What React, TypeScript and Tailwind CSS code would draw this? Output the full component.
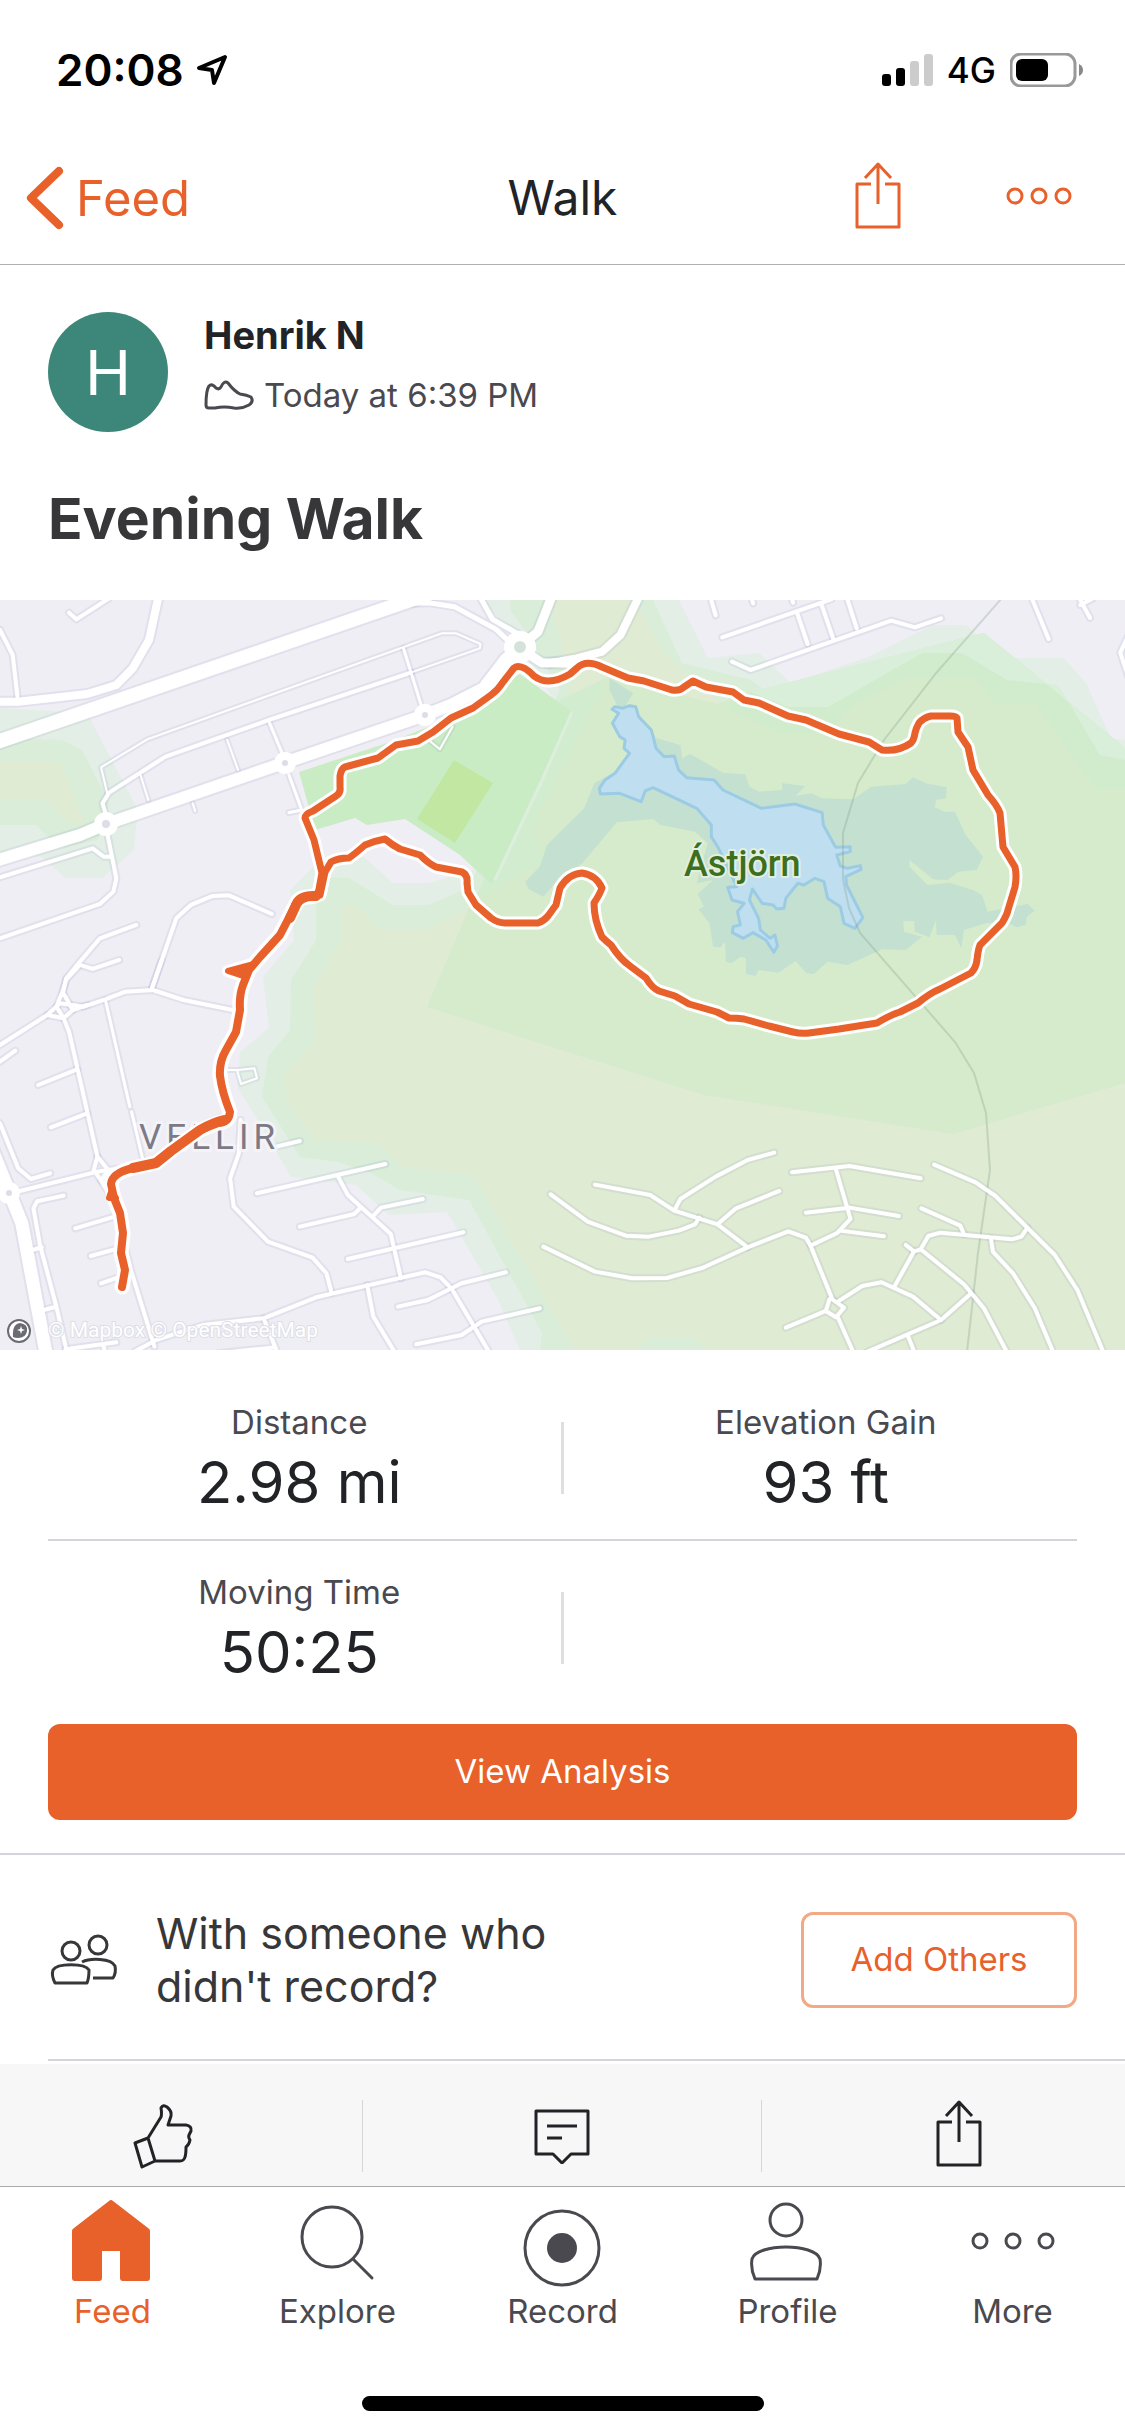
import React from "react";

/* ---------- Map ---------- */

type Road = { w: number; d: string };
type Tile = { transform: string; roads: Road[] };

const tiles: Tile[] = [
  {
    transform: "matrix(.3635 0 0 .3333 0 -10)",
    roads: [
      { w: 4, d: "M0 120L35 195L48 320M190 68L210 88L300 25" },
      { w: 5, d: "M1130 40L1180 38L1250 50L1365 118L1410 165M1320 20L1355 88L1430 135" },
      { w: 2, d: "M295 610L278 532L405 448L1215 130L1255 130L1322 162L1320 175L1130 248" },
      { w: 4, d: "M290 670L282 640L300 608L455 500L740 390L1130 248" },
      { w: 3, d: "M1110 175L1160 350M740 395L780 500" },
      { w: 2, d: "M625 450L655 540M385 550L408 630M530 640L537 663M1185 455L1210 478L1245 410" },
      { w: 3, d: "M795 555L830 660L795 668M845 690L892 850" },
      { w: 4, d: "M0 862L255 775L285 800L308 800M295 730L308 800L320 865L312 905L275 942L0 1045" },
      { w: 4, d: "M418 1195L485 985L525 945L585 918L630 916L748 972" },
      { w: 4, d: "M375 1005L275 1045L220 1115L182 1165L172 1215M220 1125L255 1137L328 1110" },
      { w: 8, d: "M0 335L50 335L240 312L320 285L365 235L410 150L440 0" },
      { w: 9, d: "M1430 170L1480 125L1525 0" },
      { w: 9, d: "M1450 190L1490 218L1600 220" },
      { w: 12, d: "M-20 815L220 735L290 703L783 518L1170 375L1240 345L1330 295L1390 210L1430 170" },
      { w: 14, d: "M-40 468L1130 30L1250 -15" },
    ],
  },
  {
    transform: "matrix(.3635 0 0 .3333 555 -10)",
    roads: [
      { w: 4, d: "M427 20L442 76M540 20L545 40M650 20L655 38M460 142L760 28M665 65L695 162M732 40L765 145M802 20L830 115" },
      { w: 4, d: "M487 215L538 240L925 92L990 112L1062 85M1310 20L1358 147M1440 20L1472 84M1445 45L1480 25M1580 130L1555 188L1580 270" },
      { w: 8, d: "M-20 220L60 205L130 185L180 135L240 0" },
    ],
  },
  {
    transform: "matrix(.3635 0 0 .3333 0 360)",
    roads: [
      { w: 4, d: "M0 255L130 165L165 130L230 140L290 118L345 95L420 90L505 120L640 150" },
      { w: 4, d: "M220 15L182 60L172 95L155 140L175 175L200 150L172 95M175 175L190 215L268 590" },
      { w: 4, d: "M130 165L175 175M200 150L240 135M418 85L445 0M0 305L42 272M105 375L212 328M140 502L240 460" },
      { w: 3, d: "M290 120L357 440M362 455L392 595" },
      { w: 4, d: "M0 490L50 625L85 657L138 640M30 700L268 635L330 625M268 590L258 630L278 662L298 630L268 590" },
      { w: 4, d: "M175 707L102 724L92 745L110 855L155 1040L185 1180M88 870L115 862M120 1050L155 1040" },
      { w: 4, d: "M278 662L310 720L360 930L425 1160M207 805L315 770M250 888L325 865M278 970L345 945" },
      { w: 2, d: "M625 330L655 330L700 325L707 355L663 372L652 330" },
      { w: 4, d: "M662 480L657 580L633 655L643 740L737 845L860 893L898 940L912 998M760 560L825 543" },
      { w: 4, d: "M707 700L1060 612M930 650L957 705L1075 822L1103 955M825 800L975 762L990 745M1025 770L1048 743L1163 717" },
      { w: 4, d: "M957 897L1275 817M180 1168L320 1147M285 1160L290 1180M370 1175L430 1140L560 1095L725 1075L870 1012L1105 953L1170 937L1212 952L1243 987L1345 1175" },
      { w: 4, d: "M1010 975L1027 1070L1085 1175M1095 1040L1177 1020L1270 970L1392 937M1145 1153L1270 1125L1325 1085L1485 1045" },
      { w: 4, d: "M725 1075L762 1175M600 1180L750 1163" },
      { w: 13, d: "M-40 520L25 695L60 790L130 1200" },
    ],
  },
  {
    transform: "matrix(.3635 0 0 .3333 555 360)",
    roads: [
      { w: 4, d: "M110 674L262 705L328 752L447 793L530 862M328 752L345 717L442 650L530 600L603 578M447 793L498 745L617 693" },
      { w: 4, d: "M-12 703L90 785L195 827L258 830L340 812L385 793L397 773M-32 860L110 935L212 955L308 954L405 924L530 862L642 814L690 833L703 857L763 1018" },
      { w: 4, d: "M652 637L810 618L1006 655M772 625L813 777L775 820L703 857M690 758L810 743L946 768M785 812L905 829" },
      { w: 4, d: "M1043 614L1157 667L1212 708L1375 885L1437 990L1510 1180M1008 745L1115 797L1125 822" },
      { w: 4, d: "M1300 803L1283 830L1257 838L1060 818L1027 828L1006 868L988 874L965 855M1006 868L1125 973L1180 1045L1245 1180" },
      { w: 4, d: "M1199 835L1205 876L1260 940L1320 1045L1372 1180M988 874L932 983M778 1025L845 978L898 967L985 1010L1062 1080L1145 1000" },
      { w: 4, d: "M763 1018L795 1043L773 1072L745 1053L755 1018ZM745 1053L635 1103M778 1072L820 1175M1062 1080L860 1175M970 1125L990 1180" },
    ],
  },
];

const route =
  "M320 295L325 272L331 262Q338 258 349 258Q356 253 365 245Q374 241 385 239Q392 245 400 249L420 255Q429 264 436 267L462 272Q468 275 467 283L468 292L476 305L491 318Q498 323 505 323L538 323Q544 321 548 316L556 305L560 288Q568 274 582 273Q596 275 602 288Q600 294 594 303Q594 320 602 337Q606 341 611 345Q620 359 630 366L646 378Q652 388 659 391L675 396L689 404L717 412L729 418Q737 418 744 419L769 426L793 432Q801 434 809 433L839 429L877 423Q890 415 900 412L918 403Q930 393 940 389L971 373Q976 368 977 360Q978 350 980 345L1002 323Q1007 315 1008 310L1015 287Q1017 276 1015 267L1003 247L1000 213Q997 205 988 195L973 170L968 147L958 132L957 118Q956 116 950 116L931 116Q923 118 919 123Q916 128 915 133Q914 140 911 143Q898 152 882 150L869 142L839 134L806 120L788 116L759 103L744 100L733 92L706 87L693 81L684 87Q680 91 672 90L644 81L628 78L602 67Q586 59 577 68L570 74Q548 87 534 76Q521 63 514 68Q506 78 503 82Q498 90 491 95L473 108L451 118L433 132L418 141L396 145L378 158L345 167Q341 169 340 176L340 187Q341 193 336 196L313 211Q305 214 305 218L314 240L322 273L318 295";

const sharedLeg =
  "M323 274L320 290Q317 297 308 297Q299 297 296 304L280 335L260 357L249 370L243 385Q239 396 240 410L236 432L226 450Q219 462 220 476Q222 492 230 512Q229 523 218 523L200 530L171 551L156 563L133 568Q112 573 111 584L114 598L120 613L123 633L121 653L125 670L122 687";

function RouteMap() {
  return (
    <svg
      viewBox="0 0 1125 750"
      className="block h-auto w-full bg-[#efeef4]"
      role="img"
      aria-label="Map of the walk around Ástjörn"
    >
      {/* land cover */}
      <path fill="#e3efe6" d="M0 108L87 113L138 210L134 250L102 278L65 278L42 257L0 255Z" />
      <path fill="#d9edd9" d="M0 138L62 140L82 150L109 203L98 240L60 248L36 225L0 225Z" />
      <path fill="#dfebd3" d="M0 162L60 162L87 227L62 218L47 200L0 200Z" />
      <path
        fill="#e3efe6"
        d="M320 260L364 257L393 283L429 283L473 270L491 110L560 110L510 30L480 0L679 0L708 58L759 53L791 83L868 57L933 25L966 25L1004 58L1064 58L1086 83L1111 138L1125 140V750H520L498 700L447 612L389 615L356 585L291 577L262 527L238 488L240 452L269 428L263 377L294 340L290 290Z"
      />
      <path
        fill="#d9edd9"
        d="M316 277L349 278L393 305L429 305L469 287L560 90L525 30L510 10V0H653L682 63L751 80L788 107H828L922 53H962L1007 80L1058 85L1100 155L1125 160V750H551L520 693L469 600L400 590L371 573L338 562L300 557L262 497L268 457L290 430L291 380L316 340Z"
      />
      <path
        fill="#dfebd3"
        d="M340 305L360 308L378 330H425L469 308L560 140L570 80L550 0H635L665 55L720 102L1125 480V750H575L473 575L403 567L378 543L314 540L287 503L284 475L316 440L313 387L342 340Z"
      />
      <path fill="#d9edd9" d="M545 710L570 750H540ZM650 737H695L707 750H638Z" />
      <path
        fill="#d5ebcb"
        d="M469 308L606 78L718 104L751 92L984 33L1125 148V483L953 534L704 495L555 448L427 407Z"
      />
      <path
        fill="#d1eccd"
        d="M751 92L984 33L1125 148V187H1095L1035 103L995 103L973 77H908L853 105L828 133H780L725 108Z"
      />
      <path
        fill="#d9efda"
        d="M751 92L984 33L1125 148V160L1100 155L1058 85L1007 80L962 53H922L828 107H788Z"
      />
      <path fill="#d2ecd0" d="M606 78L530 230L545 260L475 300L505 230L560 100Z" />
      <path
        fill="#caecc5"
        d="M299 172L390 142L451 118L520 74L572 112L491 284L460 255L405 219L367 225L355 218L315 230Z"
      />
      <path fill="#c2e7a2" d="M454 160L493 183L455 243L417 219Z" />
      <path fill="none" stroke="#dcefdc" strokeWidth="3" d="M572 112L540 185L495 280" />

      {/* wetlands, lake and railway */}
      <g transform="matrix(.3635 0 0 .3333 555 -10)">
        <path
          fill="#c4e0d0"
          d="M150 265L215 310L195 345L280 445L345 465L350 505L372 492L462 548L523 553L535 590L562 605L625 600L625 580L688 588L662 618L705 610L735 625L820 628L870 590L965 582L985 562L1020 580L1078 592L1075 625L1048 630L1045 652L1072 665L1100 665L1130 735L1178 800L1160 840L1110 845L1080 870L1040 868L975 810L975 830L1025 885L1085 878L1150 900L1175 915L1190 965L1300 942L1320 962L1298 980L1295 1005L1270 1012L1240 995L1185 1000L1125 1020L1118 1075L1100 1035L1050 1035L1048 990L1030 1042L990 1025L988 993L958 993L960 1025L1010 1040L965 1080L900 1078L805 1125L750 1115L712 1152L692 1150L662 1113L615 1148L560 1140L552 1158L525 1152L525 1105L510 1100L485 1120L470 1115L468 1055L455 1072L435 1070L425 1000L395 958L410 950L392 912L435 870L390 880L420 760L385 725L290 705L270 687L170 697L75 820L0 880L-32 920L-72 898L-82 875L-42 830L-22 765L80 655L108 580L240 500L150 300Z"
        />
        <path
          fill="#bfdff0"
          stroke="#9ccbe4"
          strokeWidth="3"
          strokeLinejoin="round"
          vectorEffect="non-scaling-stroke"
          d="M157 358L165 350L185 355L205 347L222 350L230 380L265 420L278 475L300 500L328 498L340 540L362 563L438 570L462 600L568 655L660 642L735 668L738 705L772 772L812 770L812 785L775 795L785 828L805 835L840 827L842 838L800 860L802 885L847 983L825 1015L795 1000L785 950L750 925L740 875L715 865L685 885L668 880L635 925L630 955L610 957L600 945L570 940L543 897L535 930L560 985L565 1020L592 1045L605 1035L612 1068L602 1087L580 1050L545 1028L518 1045L488 1028L490 1010L510 1005L502 965L520 940L487 930L475 892L500 890L450 775L430 740L430 705L390 655L270 593L248 603L237 635L178 610L125 612L122 595L138 570L165 550L205 490L190 475L193 450L178 440L158 400L175 370Z"
        />
      </g>
      <path
        fill="none"
        stroke="#7f9880"
        strokeOpacity=".28"
        strokeWidth="2"
        d="M1002 -2L937 72L884 140L858 183L843 233V280L849 308L860 333L955 442L974 473L986 513L990 570L978 653L967 752"
      />

      {/* roads: casings first, then the white surface */}
      {tiles.map((tile, i) => (
        <g key={i} transform={tile.transform} fill="none" stroke="#6a6fb0" strokeOpacity=".1" strokeLinejoin="round" strokeLinecap="round">
          {tile.roads.map((r, j) => (
            <path key={j} d={r.d} strokeWidth={r.w + 4} vectorEffect="non-scaling-stroke" />
          ))}
        </g>
      ))}
      {tiles.map((tile, i) => (
        <g key={i} transform={tile.transform} fill="none" stroke="#fff" strokeLinejoin="round" strokeLinecap="round">
          {tile.roads.map((r, j) => (
            <path key={j} d={r.d} strokeWidth={r.w} vectorEffect="non-scaling-stroke" />
          ))}
        </g>
      ))}
      <g fill="#dcdde8" stroke="#fff" strokeWidth="8">
        <circle cx="106" cy="224" r="8" />
        <circle cx="285" cy="163" r="7" />
        <circle cx="425" cy="115" r="7" />
        <circle cx="520" cy="47" r="11" fill="#d3e3dc" strokeWidth="10" />
        <circle cx="9" cy="593" r="7" />
      </g>

      {/* place names */}
      <g stroke="#f3f3f8" strokeWidth="6" strokeLinejoin="round" paintOrder="stroke">
        <text x="684" y="276" className="font-['Roboto',sans-serif] text-[36px] font-medium" fill="#3d6f1c" stroke="#e2efe0" strokeWidth="4">
          Ástjörn
        </text>
        <text x="139" y="549" className="font-['Roboto',sans-serif] text-[35px] tracking-[5px]" fill="#7c7a86">
          VELLIR
        </text>
      </g>

      {/* recorded route */}
      <g fill="none" strokeLinecap="round" strokeLinejoin="round">
        <path stroke="#fff" strokeWidth="13" d={route} />
        <path stroke="#fff" strokeWidth="15" d={sharedLeg} />
        <path stroke="#fff" strokeWidth="12" d="M228 371L252 364L243 376Z" />
        <path stroke="#e8602a" strokeWidth="7" d={route} />
        <path stroke="#e8602a" strokeWidth="8" d={sharedLeg} />
        <path stroke="#e8602a" fill="#e8602a" strokeWidth="6" d="M228 371L254 364L243 376ZM111 592L109 598L116 598Z" />
        <path stroke="#e8602a" strokeWidth="10" d="M316 296Q300 295 296 305L290 318M224 520Q212 523 200 530L171 551L156 563L133 568" />
      </g>

      {/* attribution */}
      <circle cx="19" cy="731" r="11" fill="#fff" stroke="#6b6b75" strokeWidth="2" />
      <path fill="#6b6b75" d="M13 737Q12 724 20 723Q28 724 27 731Q26 738 18 738Q15 738 13 737Z" />
      <path fill="#fff" d="M21 726L22 729L25 730L22 731L21 734L20 731L17 730L20 729Z" />
      <text
        x="48"
        y="737"
        className="font-['Roboto',sans-serif] text-[21px]"
        fill="#fff"
        stroke="#dedee7"
        strokeWidth="2"
        paintOrder="stroke"
      >
        © Mapbox © OpenStreetMap
      </text>
    </svg>
  );
}

/* ---------- Icons ---------- */

function ShareIcon({ className }: { className: string }) {
  return (
    <svg viewBox="0 0 48 68" className={className} fill="none" stroke="currentColor" strokeWidth="3" strokeLinejoin="round" aria-hidden="true">
      <path d="M16 22H2V65H44V22H30M23 42V3M10 16L23 2L36 16" />
    </svg>
  );
}

function DotsIcon({ className, gap }: { className: string; gap: number }) {
  return (
    <svg viewBox="-50 -10 100 20" className={className} fill="none" stroke="currentColor" strokeWidth="3" aria-hidden="true">
      <circle cx={-gap} r="7" />
      <circle r="7" />
      <circle cx={gap} r="7" />
    </svg>
  );
}

function FeedIcon() {
  return (
    <svg viewBox="2 1 86 84" className="h-[84px] w-[86px]" fill="currentColor" aria-hidden="true">
      <path d="M41 2Q43 0 45 2L80 29Q82 30 82 32V79Q82 82 79 82H55Q52 82 52 79V52H34V79Q34 82 31 82H7Q4 82 4 79V32Q4 30 6 29Z" />
    </svg>
  );
}

function ExploreIcon() {
  return (
    <svg viewBox="2 1 86 84" className="h-[84px] w-[86px]" fill="none" stroke="currentColor" strokeWidth="3" strokeLinecap="round" aria-hidden="true">
      <circle cx="39" cy="38" r="30" />
      <path d="M60 60L79 79" />
    </svg>
  );
}

function RecordIcon() {
  return (
    <svg viewBox="1 1 86 84" className="h-[84px] w-[86px] overflow-visible" fill="none" stroke="currentColor" strokeWidth="3" aria-hidden="true">
      <circle cx="43" cy="49" r="37" />
      <circle cx="43" cy="49" r="15" fill="currentColor" stroke="none" />
    </svg>
  );
}

function ProfileIcon() {
  return (
    <svg viewBox="2 1 86 84" className="h-[84px] w-[86px]" fill="none" stroke="currentColor" strokeWidth="3" strokeLinejoin="round" aria-hidden="true">
      <circle cx="43" cy="21" r="16" />
      <path d="M12 80C8 71 8 66 9 60C14 44 72 44 77 60C78 66 78 71 74 80Z" />
    </svg>
  );
}

function MoreIcon() {
  return (
    <div className="flex h-[84px] items-center pb-0.5">
      <DotsIcon className="h-5 w-[100px]" gap={33} />
    </div>
  );
}

/* ---------- Page ---------- */

function Stat({ label, value }: { label: string; value: string }) {
  return (
    <div className="flex flex-col items-center">
      <dt className="text-[33px] leading-10 text-[#4a494f]">{label}</dt>
      <dd className="text-[58px] leading-[80px] text-[#222326]">{value}</dd>
    </div>
  );
}

const tabs = [
  { label: "Feed", icon: <FeedIcon />, active: true },
  { label: "Explore", icon: <ExploreIcon />, active: false },
  { label: "Record", icon: <RecordIcon />, active: false },
  { label: "Profile", icon: <ProfileIcon />, active: false },
  { label: "More", icon: <MoreIcon />, active: false },
];

export default function App() {
  return (
    <div className="flex min-h-screen w-full flex-col overflow-hidden bg-white font-['Inter','Liberation_Sans',sans-serif] text-[#222326]">
      {/* status bar */}
      <div className="flex h-[132px] items-center justify-between pt-2 pr-[42px] pl-14 text-black">
        <div className="flex items-center gap-3">
          <span className="text-[44px] leading-none font-semibold">20:08</span>
          <svg viewBox="0 0 32 32" className="size-8" fill="none" stroke="currentColor" strokeWidth="4" strokeLinejoin="round" aria-hidden="true">
            <path d="M29 3L3 14L16 16L18 29Z" />
          </svg>
        </div>
        <div className="flex items-center gap-3.5">
          <svg viewBox="0 0 51 34" className="h-[34px] w-[51px]" aria-hidden="true">
            <rect y="21" width="9" height="12" rx="3" />
            <rect x="14" y="15" width="9" height="18" rx="3" />
            <rect x="28" y="8" width="9" height="25" rx="3" fill="#ccc" />
            <rect x="42" y="1" width="9" height="32" rx="3" fill="#ccc" />
          </svg>
          <span className="text-[35px] leading-none font-medium">4G</span>
          <svg viewBox="0 0 73 34" className="h-[34px] w-[73px]" aria-hidden="true">
            <rect x="1" y="1" width="64" height="32" rx="10" fill="none" stroke="#999" strokeWidth="3" />
            <rect x="6" y="6" width="32" height="22" rx="6" />
            <path d="M69 11Q73 13 73 17Q73 21 69 23Z" fill="#888" />
          </svg>
        </div>
      </div>

      {/* navigation bar */}
      <header className="grid h-[133px] grid-cols-[1fr_auto_1fr] items-center border-b border-[#b0b0b2]">
        <a href="#feed" className="flex items-center gap-3 pl-6 text-[#e8602a]">
          <svg viewBox="0 0 40 66" className="h-[66px] w-10" fill="none" stroke="currentColor" strokeWidth="8" strokeLinecap="round" strokeLinejoin="round" aria-hidden="true">
            <path d="M35 6L7 33L35 60" />
          </svg>
          <span className="text-[49px] leading-none">Feed</span>
        </a>
        <h1 className="text-[48px] leading-none">Walk</h1>
        <div className="flex items-center justify-end gap-[86px] pr-9 pb-1 text-[#e8602a]">
          <button type="button" aria-label="Share">
            <ShareIcon className="h-[68px] w-12" />
          </button>
          <button type="button" aria-label="More options">
            <DotsIcon className="h-5 w-[100px]" gap={24} />
          </button>
        </div>
      </header>

      {/* activity header */}
      <section className="px-12 pt-[47px]">
        <div className="flex gap-9">
          <div className="flex size-[120px] shrink-0 items-center justify-center rounded-full bg-[#3d877a] text-[62px] text-white">H</div>
          <div>
            <p className="text-[38px] leading-[46px] font-bold">Henrik N</p>
            <div className="mt-3.5 flex items-center gap-2.5 text-[#4a494f]">
              <svg viewBox="0 0 50 30" className="h-[30px] w-[50px]" fill="none" stroke="currentColor" strokeWidth="3" strokeLinecap="round" strokeLinejoin="round" aria-hidden="true">
                <path d="M2 25Q2 10 5 6Q8 3 12 8Q15 10 17 7Q20 0 24 3Q30 11 36 14Q43 15 47 17Q50 22 45 25Q38 29 30 28Q20 26 11 28L5 28Q2 28 2 25Z" />
              </svg>
              <span className="text-[33px] leading-[46px]">Today at 6:39 PM</span>
            </div>
          </div>
        </div>
        <h2 className="mt-[51px] mb-[45px] text-[57px] leading-[72px] font-bold text-[#373739]">Evening Walk</h2>
      </section>

      <RouteMap />

      {/* stats */}
      <section className="px-12">
        <dl>
          <div className="grid h-[191px] grid-cols-[1fr_24px_1fr] items-start border-b-2 border-[#d5d4de] pt-[52px]">
            <Stat label="Distance" value="2.98 mi" />
            <div className="mt-5 h-[72px] w-[3px] justify-self-center bg-[#dfdfe1]" />
            <Stat label="Elevation Gain" value="93 ft" />
          </div>
          <div className="grid h-[183px] grid-cols-[1fr_24px_1fr] items-start pt-[31px]">
            <Stat label="Moving Time" value="50:25" />
            <div className="mt-5 h-[72px] w-[3px] justify-self-center bg-[#dfdfe1]" />
          </div>
        </dl>
        <button type="button" className="mb-[33px] h-24 w-full rounded-xl bg-[#e8602a] text-[33px] text-white">
          View Analysis
        </button>
      </section>

      {/* companions */}
      <section className="border-t-2 border-[#d5d4de] pl-12">
        <div className="flex h-[206px] items-center gap-[34px] border-b-2 border-[#d5d4de] pt-1.5 pr-12">
          <svg viewBox="8 8 74 62" className="h-[62px] w-[74px] shrink-0" fill="none" stroke="#373739" strokeWidth="3" strokeLinejoin="round" aria-hidden="true">
            <circle cx="31" cy="30" r="9" />
            <circle cx="58" cy="24" r="9" />
            <path d="M15 62C12 56 12 52 13 49C17 42 45 42 49 49C49 54 49 57 47 62Z" />
            <path d="M42 41C50 37 71 37 75 45C76 50 75 54 73 57H53" />
          </svg>
          <p className="w-[460px] text-[43px] leading-[53px] text-[#373739]">With someone who didn't record?</p>
          <button type="button" className="ml-auto h-24 w-[276px] shrink-0 rounded-xl border-3 border-[#f2a985] text-[33px] text-[#e8602a]">
            Add Others
          </button>
        </div>
      </section>

      {/* social actions */}
      <div className="mt-[3px] h-[122px] overflow-hidden bg-[#f7f7f7]">
        <div className="-mx-9 grid grid-cols-3 divide-x divide-[#d5d5d7] pt-9">
          <button type="button" aria-label="Give kudos" className="flex h-[72px] items-center justify-center">
            <svg viewBox="8 5 70 72" className="h-[72px] w-[70px]" fill="none" stroke="#222326" strokeWidth="3" strokeLinejoin="round" aria-hidden="true">
              <path d="M15 48L28 43L35 66L22 72ZM28 43L41 22Q42 19 41 13Q43 9 47 12Q52 16 51 21L48 30H66Q72 31 71 36L69 40Q68 42 70 45Q69 50 66 52Q66 59 65 62Q64 66 60 66H35" />
            </svg>
          </button>
          <button type="button" aria-label="Comment" className="flex h-[72px] items-center justify-center">
            <svg viewBox="0 0 56 56" className="size-14" fill="none" stroke="#222326" strokeWidth="3" strokeLinejoin="round" aria-hidden="true">
              <path d="M2 3H54V46H37L28 55L19 46H2ZM13 18H43M13 30H28" />
            </svg>
          </button>
          <button type="button" aria-label="Share activity" className="flex h-[72px] items-center justify-center pr-1 pb-1 text-[#222326]">
            <ShareIcon className="h-[68px] w-12" />
          </button>
        </div>
      </div>

      {/* tab bar */}
      <nav className="grid grid-cols-5 border-t border-[#a8a8aa] pt-[13px]">
        {tabs.map((tab) => (
          <a
            key={tab.label}
            href={"#" + tab.label.toLowerCase()}
            aria-current={tab.active ? "page" : undefined}
            className={"flex flex-col items-center gap-1.5 " + (tab.active ? "text-[#e8602a]" : "text-[#4a494f]")}
          >
            {tab.icon}
            <span className="text-[33px] leading-[42px]">{tab.label}</span>
          </a>
        ))}
      </nav>
      <div className="mt-16 mb-6 h-[15px] w-[402px] self-center rounded-full bg-black" />
    </div>
  );
}
